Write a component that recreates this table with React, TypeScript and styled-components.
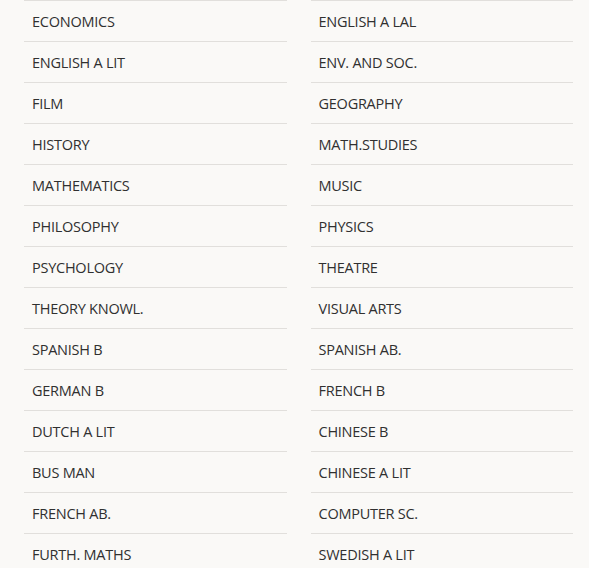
import React from 'react';
import styled, { createGlobalStyle } from 'styled-components';

const left = [
  'ECONOMICS',
  'ENGLISH A LIT',
  'FILM',
  'HISTORY',
  'MATHEMATICS',
  'PHILOSOPHY',
  'PSYCHOLOGY',
  'THEORY KNOWL.',
  'SPANISH B',
  'GERMAN B',
  'DUTCH A LIT',
  'BUS MAN',
  'FRENCH AB.',
  'FURTH. MATHS',
];

const right = [
  'ENGLISH A LAL',
  'ENV. AND SOC.',
  'GEOGRAPHY',
  'MATH.STUDIES',
  'MUSIC',
  'PHYSICS',
  'THEATRE',
  'VISUAL ARTS',
  'SPANISH AB.',
  'FRENCH B',
  'CHINESE B',
  'CHINESE A LIT',
  'COMPUTER SC.',
  'SWEDISH A LIT',
];

const App = () => {
  return (
    <>
      <GlobalStyle />
      <Page>
        <SubjectList>
          {left.map((s) => (
            <Subject key={s}>{s}</Subject>
          ))}
        </SubjectList>
        <SubjectList>
          {right.map((s) => (
            <Subject key={s}>{s}</Subject>
          ))}
        </SubjectList>
      </Page>
    </>
  );
};

export default App;

const GlobalStyle = createGlobalStyle`
  html, body {
    margin: 0;
    background: #faf9f7;
    overflow: hidden;
  }
`;

const Page = styled.div`
  display: grid;
  grid-template-columns: 1fr 1fr;
  column-gap: 24px;
  padding: 0 16px 0 24px;
  height: 568px;
  overflow: hidden;
  font-family: 'Open Sans', 'Liberation Sans', sans-serif;
`;

const SubjectList = styled.ul`
  list-style: none;
  margin: 0;
  padding: 0;
  border-top: 1px solid #e1dfdc;
`;

const Subject = styled.li`
  height: 38px;
  line-height: 38px;
  padding: 2px 0 0 8px;
  border-bottom: 1px solid #e1dfdc;
  font-size: 14.5px;
  color: #303030;
  letter-spacing: -0.25px;
`;
